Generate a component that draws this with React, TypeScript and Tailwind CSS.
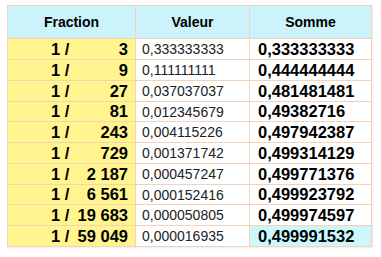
const rows: [string, string, string][] = [
  ["3", "0,333333333", "0,333333333"],
  ["9", "0,111111111", "0,444444444"],
  ["27", "0,037037037", "0,481481481"],
  ["81", "0,012345679", "0,49382716"],
  ["243", "0,004115226", "0,497942387"],
  ["729", "0,001371742", "0,499314129"],
  ["2 187", "0,000457247", "0,499771376"],
  ["6 561", "0,000152416", "0,499923792"],
  ["19 683", "0,000050805", "0,499974597"],
  ["59 049", "0,000016935", "0,499991532"],
];

// 10 rows sharing 208px
const heights = ["h-[21px]", "h-[21px]", "h-[21px]", "h-[20px]", "h-[21px]", "h-[21px]", "h-[21px]", "h-[20px]", "h-[21px]", "h-[21px]"];

const cell = "flex items-center border-r border-b border-[#f3d2b8] leading-none";

export default function App() {
  return (
    <div className="w-[381px] h-[257px] bg-white pt-[5px] pl-[7px] font-['Liberation_Sans',Arial,sans-serif] text-black">
      <div className="grid grid-cols-[128px_114px_122px] w-fit border-l border-t border-[#f3d2b8] shadow-[1px_1px_2px_rgba(0,0,0,0.08)]">
        {["Fraction", "Valeur", "Somme"].map((h) => (
          <div key={h} className={`${cell} h-[33px] justify-center bg-[#ccf3fb] text-[14px] font-bold`}>
            {h}
          </div>
        ))}
        {rows.map(([d, v, s], i) => (
          <div key={d} className="contents">
            <div className={`${cell} ${heights[i]} bg-[#fff48e] text-[16.5px] font-bold`}>
              <span className="pl-[43px]">1 /</span>
              <span className="flex-1 text-right pr-[7px]">{d}</span>
            </div>
            <div className={`${cell} ${heights[i]} bg-white pl-[6px] text-[14px] text-[#222]`}>{v}</div>
            <div
              className={`${cell} ${heights[i]} pl-[8px] text-[16.5px] font-bold ${
                i === rows.length - 1 ? "bg-[#ccf8fc]" : "bg-white"
              }`}
            >
              {s}
            </div>
          </div>
        ))}
      </div>
    </div>
  );
}
